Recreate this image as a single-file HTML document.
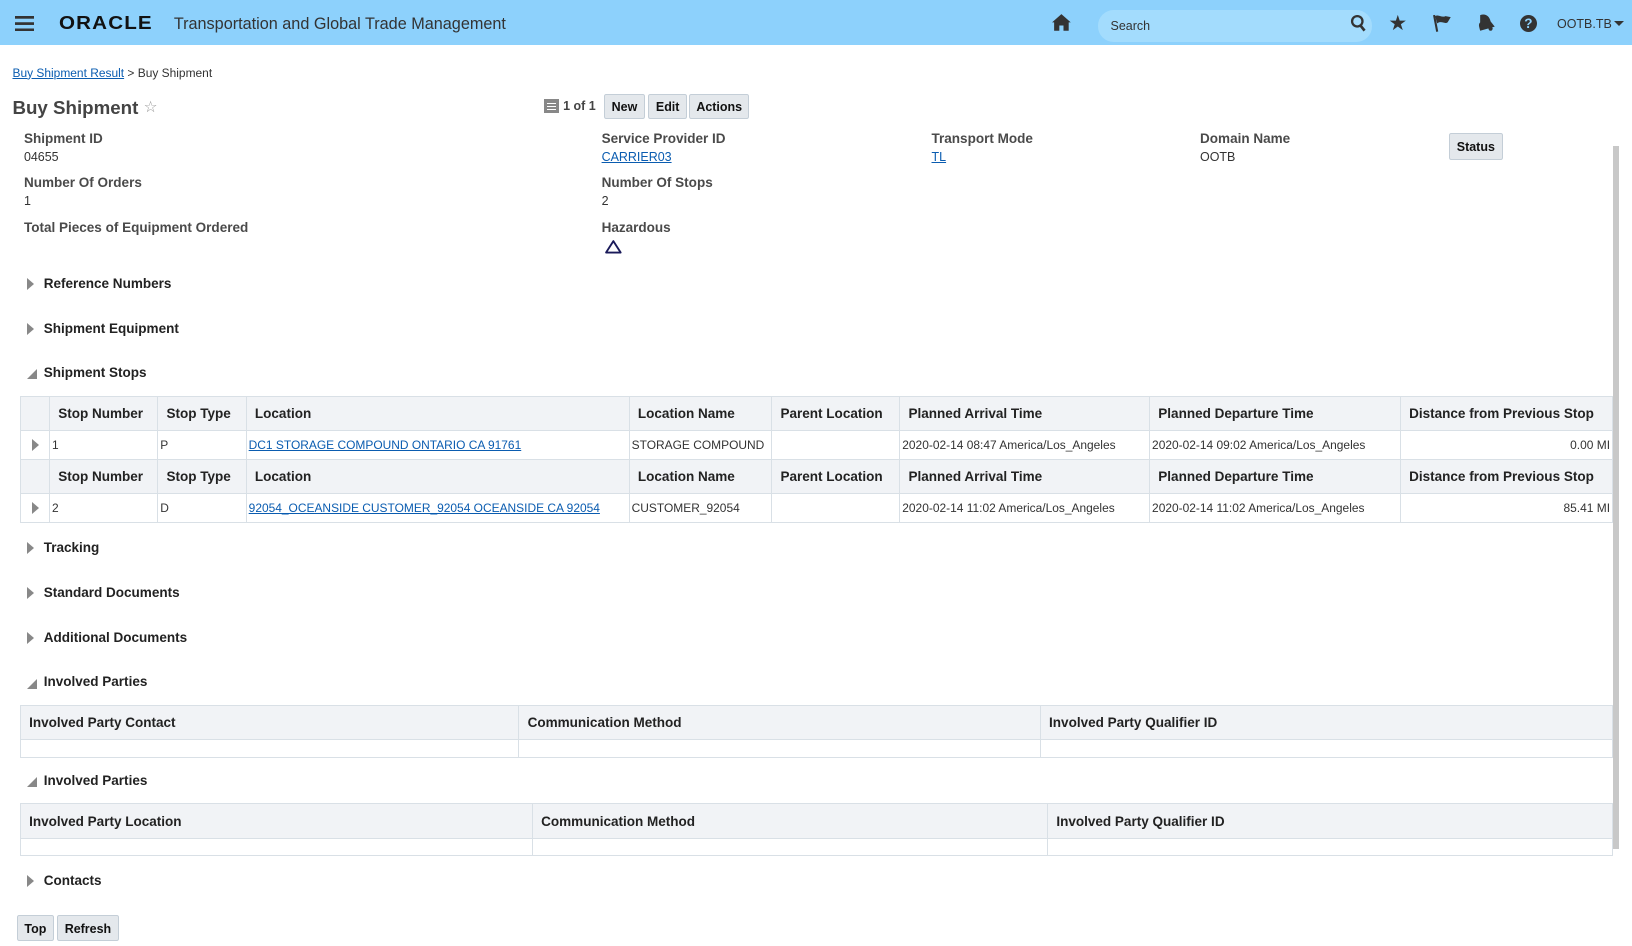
<!DOCTYPE html>
<html><head><meta charset="utf-8">
<style>
html,body{margin:0;padding:0;background:#fff;overflow:hidden}
body{width:1632px;height:946px}
#w{position:relative;width:1568px;height:909px;zoom:1.0408;font-family:"Liberation Sans",Arial,sans-serif;color:#333}
.a{position:absolute;white-space:nowrap}
.hdr{position:absolute;left:0;top:0;width:1568px;height:43px;background:#8dd1fc}
.lbl{position:absolute;font-size:13px;font-weight:bold;color:#4a4a4a;white-space:nowrap}
.val{position:absolute;font-size:12px;color:#333;white-space:nowrap}
a{color:#0a5cb0;text-decoration:underline}
.btn{position:absolute;height:24px;border:1px solid #c4ced7;background:#e4e8ec;border-radius:2px;font-size:12px;font-weight:bold;color:#111;text-align:center;line-height:24px;box-sizing:border-box}
.sec{position:absolute;left:26px;font-size:13px;font-weight:bold;color:#222;white-space:nowrap}
.sec .t{position:absolute;left:0;top:2px}
.sec span.n{position:absolute;left:16px;top:0}
.tri-r{width:0;height:0;border-top:6px solid transparent;border-bottom:6px solid transparent;border-left:7px solid #888}
.tri-d{width:0;height:0;border-left:10px solid transparent;border-bottom:10px solid #888}
table{position:absolute;border-collapse:collapse;table-layout:fixed;font-size:12px}
td,th{border:1px solid #d9e0e6;padding:0 4px;white-space:nowrap;overflow:hidden;text-align:left}
th{background:#f1f3f6;font-weight:bold;font-size:13px;color:#222;height:32px;padding-left:8px}
td{height:27px;font-size:11.5px;color:#333}
</style></head><body><div id="w">
<div class="hdr"></div>
<svg class="a" style="left:14px;top:15px" width="19" height="15"><rect y="0" width="19" height="2.6" fill="#333"/><rect y="6" width="19" height="2.6" fill="#333"/><rect y="12" width="19" height="2.6" fill="#333"/></svg>
<div class="a" style="left:57px;top:12px;font-size:18px;font-weight:bold;letter-spacing:1px;color:#111;transform:scaleX(1.1);transform-origin:left;-webkit-text-stroke:0">ORACLE</div>
<div class="a" style="left:167px;top:14px;font-size:15.6px;color:#333">Transportation and Global Trade Management</div>
<svg class="a" style="left:1010px;top:12px" width="20" height="20" viewBox="0 0 20 20"><path d="M10 2 L19 10 L17 10 L17 18 L12 18 L12 13 L8 13 L8 18 L3 18 L3 10 L1 10 Z" fill="#333"/></svg>
<div class="a" style="left:1055px;top:10px;width:263px;height:30px;border-radius:15px;background:#a3dcfd"></div>
<div class="a" style="left:1067px;top:18px;font-size:12px;color:#333">Search</div>
<svg class="a" style="left:1297px;top:13px" width="17" height="18" viewBox="0 0 17 18"><circle cx="7" cy="7" r="5" fill="none" stroke="#333" stroke-width="2.2"/><path d="M10 11 L14 16" stroke="#333" stroke-width="2.6"/></svg>
<div class="a" style="left:1334px;top:11px;font-size:20px;color:#333">★</div>
<svg class="a" style="left:1376px;top:13px" width="20" height="18" viewBox="0 0 20 18"><path d="M2 1 L5 17" stroke="#333" stroke-width="2"/><path d="M3 2 C7 0 9 4 13 2 L18 3 L15 8 C12 10 9 6 5 9 Z" fill="#333"/></svg>
<svg class="a" style="left:1418px;top:12px" width="20" height="20" viewBox="0 0 20 20"><path d="M4 3 C9 1 13 4 14 9 L18 14 L4 18 C3 14 2 12 4 10 Z" fill="#333"/><circle cx="14" cy="16" r="2" fill="#333"/></svg>
<div class="a" style="left:1460px;top:14px;width:17px;height:17px;border-radius:50%;background:#333;color:#8dd1fc;font-size:13px;font-weight:bold;text-align:center;line-height:17px">?</div>
<div class="a" style="left:1496px;top:16px;font-size:12px;color:#333">OOTB.TB</div>
<div class="a" style="left:1551px;top:20px;border-left:5px solid transparent;border-right:5px solid transparent;border-top:5px solid #333"></div>

<div class="a" style="left:12px;top:63px;font-size:11.5px"><a href="#">Buy Shipment Result</a> &gt; Buy Shipment</div>
<div class="a" style="left:12px;top:93px;font-size:18px;font-weight:bold;color:#444">Buy Shipment</div>
<div class="a" style="left:138px;top:94px;font-size:15px;color:#999">☆</div>

<div class="a" style="left:523px;top:95px;width:14px;height:14px;background:#888"></div>
<div class="a" style="left:526px;top:99px;width:8px;border-top:1px solid #fff;border-bottom:1px solid #fff;height:2px"></div>
<div class="a" style="left:526px;top:105px;width:8px;border-top:1px solid #fff"></div>
<div class="a" style="left:541px;top:95px;font-size:12px;font-weight:bold;color:#444">1 of 1</div>
<div class="btn" style="left:580px;top:90px;width:40px">New</div>
<div class="btn" style="left:623px;top:90px;width:37px">Edit</div>
<div class="btn" style="left:662px;top:90px;width:58px">Actions</div>

<div class="lbl" style="left:23px;top:126px">Shipment ID</div><div class="val" style="left:23px;top:144px">04655</div>
<div class="lbl" style="left:23px;top:168px">Number Of Orders</div><div class="val" style="left:23px;top:186px">1</div>
<div class="lbl" style="left:23px;top:211px">Total Pieces of Equipment Ordered</div>
<div class="lbl" style="left:578px;top:126px">Service Provider ID</div><div class="val" style="left:578px;top:144px"><a href="#">CARRIER03</a></div>
<div class="lbl" style="left:578px;top:168px">Number Of Stops</div><div class="val" style="left:578px;top:186px">2</div>
<div class="lbl" style="left:578px;top:211px">Hazardous</div>
<svg class="a" style="left:580px;top:230px" width="18" height="15" viewBox="0 0 18 15"><path d="M9 2 L16 13 L2 13 Z" fill="none" stroke="#1a1a5a" stroke-width="1.8" stroke-linejoin="round"/></svg>
<div class="lbl" style="left:895px;top:126px">Transport Mode</div><div class="val" style="left:895px;top:144px"><a href="#">TL</a></div>
<div class="lbl" style="left:1153px;top:126px">Domain Name</div><div class="val" style="left:1153px;top:144px">OOTB</div>
<div class="btn" style="left:1392px;top:128px;width:52px;height:26px;line-height:26px">Status</div>
<div class="a" style="left:1550px;top:140px;width:6px;height:676px;background:#c8c8c8"></div>

<div class="sec" style="top:265px"><div class="t tri-r"></div><span class="n">Reference Numbers</span></div>
<div class="sec" style="top:308px"><div class="t tri-r"></div><span class="n">Shipment Equipment</span></div>
<div class="sec" style="top:351px"><div class="t tri-d" style="top:4px"></div><span class="n">Shipment Stops</span></div>

<table style="left:19px;top:380px;width:1530px">
<colgroup><col style="width:28px"><col style="width:104px"><col style="width:85px"><col style="width:368px"><col style="width:137px"><col style="width:123px"><col style="width:240px"><col style="width:241px"><col style="width:204px"></colgroup>
<tr><th></th><th>Stop Number</th><th>Stop Type</th><th>Location</th><th>Location Name</th><th>Parent Location</th><th>Planned Arrival Time</th><th>Planned Departure Time</th><th>Distance from Previous Stop</th></tr>
<tr><td><div class="tri-r" style="margin-left:7px"></div></td><td style="padding-left:2px">1</td><td style="padding-left:2px">P</td><td style="padding-left:2px"><a href="#">DC1 STORAGE COMPOUND ONTARIO CA 91761</a></td><td style="padding-left:2px">STORAGE COMPOUND</td><td></td><td style="padding-left:2px">2020-02-14 08:47 America/Los_Angeles</td><td style="padding-left:2px">2020-02-14 09:02 America/Los_Angeles</td><td style="text-align:right;padding-right:2px">0.00 MI</td></tr>
<tr><th></th><th>Stop Number</th><th>Stop Type</th><th>Location</th><th>Location Name</th><th>Parent Location</th><th>Planned Arrival Time</th><th>Planned Departure Time</th><th>Distance from Previous Stop</th></tr>
<tr><td><div class="tri-r" style="margin-left:7px"></div></td><td style="padding-left:2px">2</td><td style="padding-left:2px">D</td><td style="padding-left:2px"><a href="#">92054_OCEANSIDE CUSTOMER_92054 OCEANSIDE CA 92054</a></td><td style="padding-left:2px">CUSTOMER_92054</td><td></td><td style="padding-left:2px">2020-02-14 11:02 America/Los_Angeles</td><td style="padding-left:2px">2020-02-14 11:02 America/Los_Angeles</td><td style="text-align:right;padding-right:2px">85.41 MI</td></tr>
</table>

<div class="sec" style="top:519px"><div class="t tri-r"></div><span class="n">Tracking</span></div>
<div class="sec" style="top:562px"><div class="t tri-r"></div><span class="n">Standard Documents</span></div>
<div class="sec" style="top:605px"><div class="t tri-r"></div><span class="n">Additional Documents</span></div>
<div class="sec" style="top:648px"><div class="t tri-d" style="top:4px"></div><span class="n">Involved Parties</span></div>
<table style="left:19px;top:677px;width:1530px">
<colgroup><col style="width:479px"><col style="width:501px"><col style="width:550px"></colgroup>
<tr><th>Involved Party Contact</th><th>Communication Method</th><th>Involved Party Qualifier ID</th></tr>
<tr><td style="height:16px"></td><td style="height:16px"></td><td style="height:16px"></td></tr>
</table>
<div class="sec" style="top:743px"><div class="t tri-d" style="top:4px"></div><span class="n">Involved Parties</span></div>
<table style="left:19px;top:772px;width:1530px">
<colgroup><col style="width:492px"><col style="width:495px"><col style="width:543px"></colgroup>
<tr><th>Involved Party Location</th><th>Communication Method</th><th>Involved Party Qualifier ID</th></tr>
<tr><td style="height:16px"></td><td style="height:16px"></td><td style="height:16px"></td></tr>
</table>
<div class="sec" style="top:839px"><div class="t tri-r"></div><span class="n">Contacts</span></div>
<div class="btn" style="left:16px;top:879px;width:36px;height:25px;line-height:25px">Top</div>
<div class="btn" style="left:55px;top:879px;width:59px;height:25px;line-height:25px">Refresh</div>
</div></body></html>
